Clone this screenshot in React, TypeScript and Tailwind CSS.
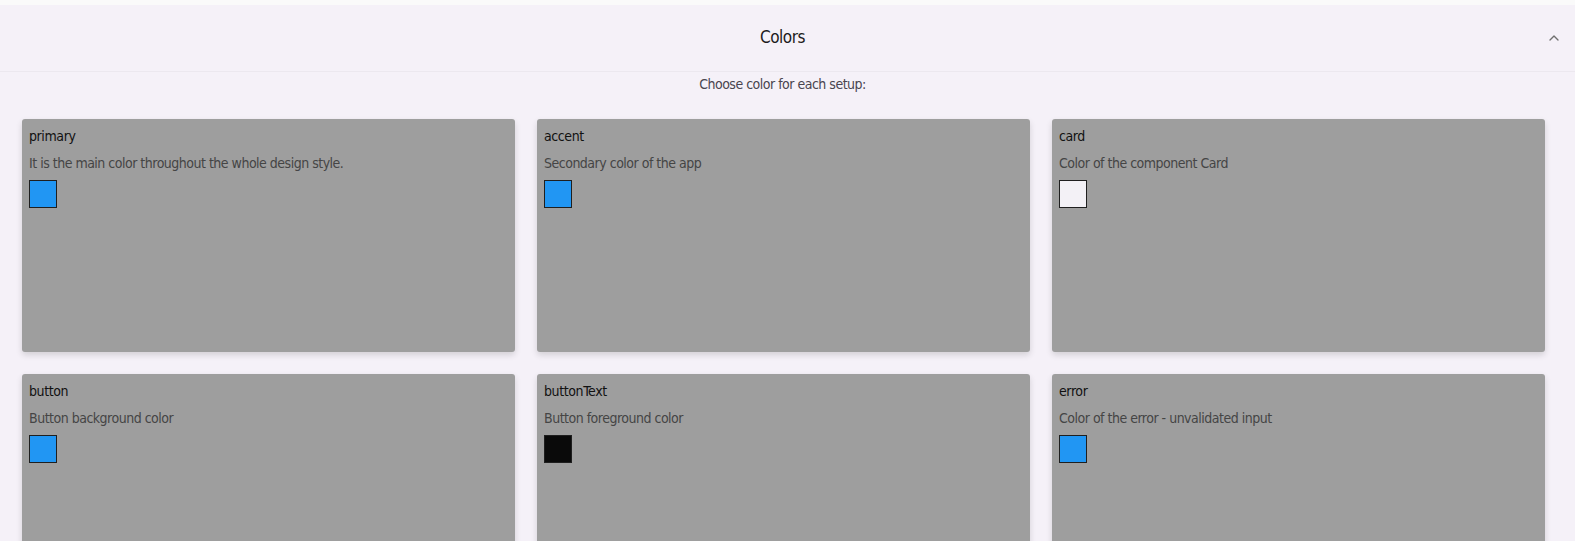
import { ChevronUp } from "lucide-react";

const colors = [
  { name: "primary", desc: "It is the main color throughout the whole design style.", value: "#2196f3" },
  { name: "accent", desc: "Secondary color of the app", value: "#2196f3" },
  { name: "card", desc: "Color of the component Card", value: "#f3f1f6" },
  { name: "button", desc: "Button background color", value: "#2196f3" },
  { name: "buttonText", desc: "Button foreground color", value: "#0a0a0a" },
  { name: "error", desc: "Color of the error - unvalidated input", value: "#2196f3" },
];

export default function App() {
  return (
    <div className="min-h-screen bg-[#fafafa] pt-[5px] font-['DejaVu_Sans_Condensed',sans-serif]">
      <div className="bg-[#f5f1f8]">
        <div className="relative flex h-[67px] items-center justify-center border-b border-[#ece8ef] pr-[10px]">
          <span className="text-[17px] tracking-[-0.5px] text-[#1d1b20]">Colors</span>
          <ChevronUp className="absolute right-[13px] top-[25px] h-4 w-4 text-[#6f6f6f]" strokeWidth={2} />
        </div>
        <p className="mt-[2px] pr-[10px] text-center text-[14px] tracking-[-0.5px] text-[#49454f]">
          Choose color for each setup:
        </p>
        <div className="grid grid-cols-3 gap-[22px] pl-[22px] pr-[30px] pt-[24px] pb-6">
          {colors.map((c) => (
            <div
              key={c.name}
              className="h-[233px] rounded-[3px] bg-[#9e9e9e] px-[7px] pt-[8px] shadow-[0_3px_6px_rgba(0,0,0,0.14)]"
            >
              <div className="text-[14px] leading-[18px] tracking-[-0.4px] text-[#111]">{c.name}</div>
              <div className="mt-[9px] text-[14px] leading-[18px] tracking-[-0.5px] text-[#454545]">{c.desc}</div>
              <div
                className="mt-[8px] h-[28px] w-[28px] border border-[#1f1f1f]"
                style={{ backgroundColor: c.value }}
              />
            </div>
          ))}
        </div>
      </div>
    </div>
  );
}
